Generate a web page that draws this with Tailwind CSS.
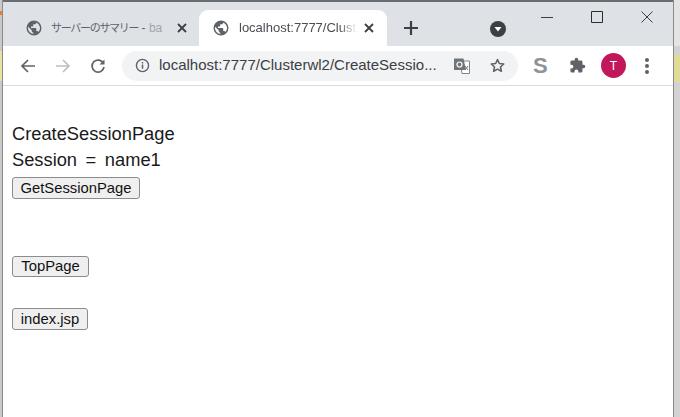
<!doctype html>
<html>
<head>
  <meta charset="UTF-8">
  <script src="https://cdn.jsdelivr.net/npm/@tailwindcss/browser@4"></script>
</head>
<body class="bg-white overflow-hidden">
  <div class="flex w-[680px] h-[417px] font-['Liberation_Sans',sans-serif]">
    <!-- what shows behind the window on the left -->
    <div class="w-[2px] shrink-0 flex flex-col bg-[#c9c9c9]">
      <div class="h-[11px]"></div>
      <div class="h-[4px] bg-[#e08030]"></div>
      <div class="h-[36px]"></div>
      <div class="h-[30px] bg-[#e8e2a0]"></div>
    </div>
    <div class="w-[671px] shrink-0 flex flex-col border-l border-[#8a8a8a]">
      <div class="h-[2px] bg-[#6b6e70]"></div>
      <!-- tab strip -->
      <div class="h-[44px] bg-[#dee1e6] flex items-end pl-[8px] relative">
        <div class="w-[188px] h-[36px] flex items-center pl-[14px] text-[12px] text-[#5f6368]">
          <svg class="w-[18px] h-[18px] shrink-0" viewBox="0 0 24 24"><path fill="#5f6368" d="M12 2a10 10 0 1 0 0 20 10 10 0 0 0 0-20zm-1 17.9A8 8 0 0 1 4.2 10.2L9 15v1c0 1.100.9 2 2 2v1.900zm6.900-2.500c-.3-.8-1-1.400-1.900-1.400h-1v-3c0-.6-.4-1-1-1H8v-2h2c.6 0 1-.4 1-1V7h2c1.100 0 2-.9 2-2v-.4a8 8 0 0 1 2.900 12.800z"/></svg>
          <span class="ml-[8px] w-[114px] whitespace-nowrap text-[11px] tracking-[-1.300px] font-['Noto_Sans_CJK_JP','Liberation_Sans',sans-serif]">サーバーのサマリー<span class="text-[12px] tracking-normal font-['Liberation_Sans',sans-serif]"> - <span class="text-[#a3a6ab]">ba</span></span></span>
          <svg class="w-[12px] h-[12px] ml-[11px]" viewBox="0 0 12 12"><path d="M2 2l8 8M10 2l-8 8" stroke="#3c4043" stroke-width="1.800"/></svg>
        </div>
        <div class="w-[188px] h-[36px] bg-white rounded-t-[9px] flex items-center pl-[13px] text-[13px] text-[#4a4d51]">
          <svg class="w-[18px] h-[18px] shrink-0" viewBox="0 0 24 24"><path fill="#5f6368" d="M12 2a10 10 0 1 0 0 20 10 10 0 0 0 0-20zm-1 17.900A8 8 0 0 1 4.200 10.200L9 15v1c0 1.100.9 2 2 2v1.900zm6.900-2.500c-.3-.8-1-1.400-1.900-1.400h-1v-3c0-.6-.4-1-1-1H8v-2h2c.6 0 1-.4 1-1V7h2c1.100 0 2-.9 2-2v-.4a8 8 0 0 1 2.900 12.800z"/></svg>
          <span class="ml-[9px] w-[118px] whitespace-nowrap overflow-hidden [mask-image:linear-gradient(to_right,black_85%,transparent)]">localhost:7777/Clust</span>
          <svg class="w-[12px] h-[12px] ml-[6px]" viewBox="0 0 12 12"><path d="M2 2l8 8M10 2l-8 8" stroke="#3c4043" stroke-width="1.800"/></svg>
        </div>
        <svg class="w-[14px] h-[14px] ml-[17px] mb-[11px]" viewBox="0 0 14 14"><path d="M7 0v14M0 7h14" stroke="#3c4043" stroke-width="2.200"/></svg>
        <svg class="w-[16px] h-[16px] ml-[72px] mb-[9px]" viewBox="0 0 16 16"><circle cx="8" cy="8" r="8" fill="#3c4043"/><path d="M4.500 6h7L8 10.500z" fill="#fff"/></svg>
        <!-- window controls -->
        <div class="absolute right-0 top-0 flex items-center h-[30px] pr-[20px] gap-[38px]">
          <svg class="w-[12px] h-[12px]" viewBox="0 0 12 12"><path d="M0 6.500h12" stroke="#3c4043" stroke-width="1"/></svg>
          <svg class="w-[12px] h-[12px]" viewBox="0 0 12 12"><path d="M.5.5h11v11H.5z" fill="none" stroke="#2c2c2c" stroke-width="1"/></svg>
          <svg class="w-[12px] h-[12px]" viewBox="0 0 12 12"><path d="M.5.500l11 11M11.500.500l-11 11" stroke="#3c4043" stroke-width="1"/></svg>
        </div>
      </div>
      <!-- toolbar -->
      <div class="h-[40px] bg-white border-b border-[#dadce0] flex items-center">
        <svg class="w-[16px] h-[16px] ml-[17px]" viewBox="0 0 16 16"><path d="M15 8H2M8 2L2 8l6 6" fill="none" stroke="#5f6368" stroke-width="1.700"/></svg>
        <svg class="w-[16px] h-[16px] ml-[19px]" viewBox="0 0 16 16"><path d="M1 8h13M8 2l6 6-6 6" fill="none" stroke="#bcc0c4" stroke-width="1.700"/></svg>
        <svg class="w-[16px] h-[16px] ml-[19px]" viewBox="0 0 16 16"><path d="M13.500 5.500A6 6 0 1 0 14 9" fill="none" stroke="#5f6368" stroke-width="1.700"/><path d="M14.500 1.500v5h-5z" fill="#5f6368"/></svg>
        <div class="ml-[16px] w-[396px] h-[30px] rounded-full bg-[#f1f3f4] flex items-center pl-[13px] text-[15px] text-[#3c4043]">
          <svg class="w-[15px] h-[15px] shrink-0" viewBox="0 0 16 16"><circle cx="8" cy="8" r="6.500" fill="none" stroke="#5f6368" stroke-width="1.500"/><path d="M8 7v4.500M8 4.300v1.500" stroke="#5f6368" stroke-width="1.600"/></svg>
          <span class="ml-[9px] w-[280px] whitespace-nowrap overflow-hidden">localhost:7777/Clusterwl2/CreateSessio...</span>
          <svg class="w-[18px] h-[18px] ml-[14px] shrink-0" viewBox="0 0 18 18"><path d="M7 4h9.500v12.500H9z" fill="#fff" stroke="#80868b"/><path d="M1 1.500h9.500L13 13H1z" fill="#70757a"/><circle cx="6.500" cy="7.500" r="2.500" fill="none" stroke="#fff" stroke-width="1.200"/><path d="M12 9l3 4M15 9l-3 4" stroke="#70757a"/></svg>
          <svg class="w-[17px] h-[17px] ml-[18px] shrink-0" viewBox="0 0 24 24"><path d="M12 3.500l2.600 5.700 6.200.7-4.600 4.200 1.300 6.100L12 17.200l-5.500 3 1.300-6.100-4.600-4.200 6.200-.7z" fill="none" stroke="#5f6368" stroke-width="2.200" stroke-linejoin="round"/></svg>
        </div>
        <span class="ml-[15px] w-[16px] text-[22px] leading-none font-bold text-[#8f9296]">S</span>
        <svg class="w-[17px] h-[17px] ml-[20px]" viewBox="0 0 24 24"><path fill="#5f6368" d="M20.500 11H19V7a2 2 0 0 0-2-2h-4V3.500a2.500 2.500 0 0 0-5 0V5H4a2 2 0 0 0-2 2v3.800h1.500a2.700 2.700 0 0 1 0 5.400H2V20a2 2 0 0 0 2 2h3.800v-1.500a2.700 2.700 0 0 1 5.400 0V22H17a2 2 0 0 0 2-2v-4h1.500a2.500 2.500 0 0 0 0-5z"/></svg>
        <div class="ml-[15px] w-[25px] h-[25px] rounded-full bg-[#c2185b] text-white text-[12px] flex items-center justify-center">T</div>
        <div class="ml-[19px] flex flex-col gap-[2px]">
          <div class="w-[4px] h-[4px] rounded-full bg-[#5f6368]"></div>
          <div class="w-[4px] h-[4px] rounded-full bg-[#5f6368]"></div>
          <div class="w-[4px] h-[4px] rounded-full bg-[#5f6368]"></div>
        </div>
      </div>
      <!-- page -->
      <div class="flex-1 bg-white pl-[9px] pt-[35px] text-[18.300px] leading-[26px] text-[#1a1a1a]">
        <p>CreateSessionPage</p>
        <p class="[word-spacing:3.500px]">Session = name1</p>
        <button class="block mt-[4px] h-[22px] w-[128px] bg-[#efefef] border border-[#8c8c8c] rounded-[3px] text-[14.800px] leading-none text-[#111]">GetSessionPage</button>
        <button class="block mt-[57px] h-[21px] w-[77px] bg-[#efefef] border border-[#8c8c8c] rounded-[3px] text-[14.800px] leading-none text-[#111]">TopPage</button>
        <button class="block mt-[31px] h-[22px] w-[76px] bg-[#efefef] border border-[#8c8c8c] rounded-[3px] text-[14.800px] leading-none text-[#111]">index.jsp</button>
      </div>
    </div>
    <!-- what shows behind the window on the right -->
    <div class="flex-1 flex flex-col bg-[#d2d2d2] border-l border-[#8a8a8a]">
      <div class="h-[46px] bg-[#e4e4e4]"></div>
      <div class="h-[9px]"></div>
      <div class="h-[27px] bg-[#e0dc96]"></div>
    </div>
  </div>
</body>
</html>
